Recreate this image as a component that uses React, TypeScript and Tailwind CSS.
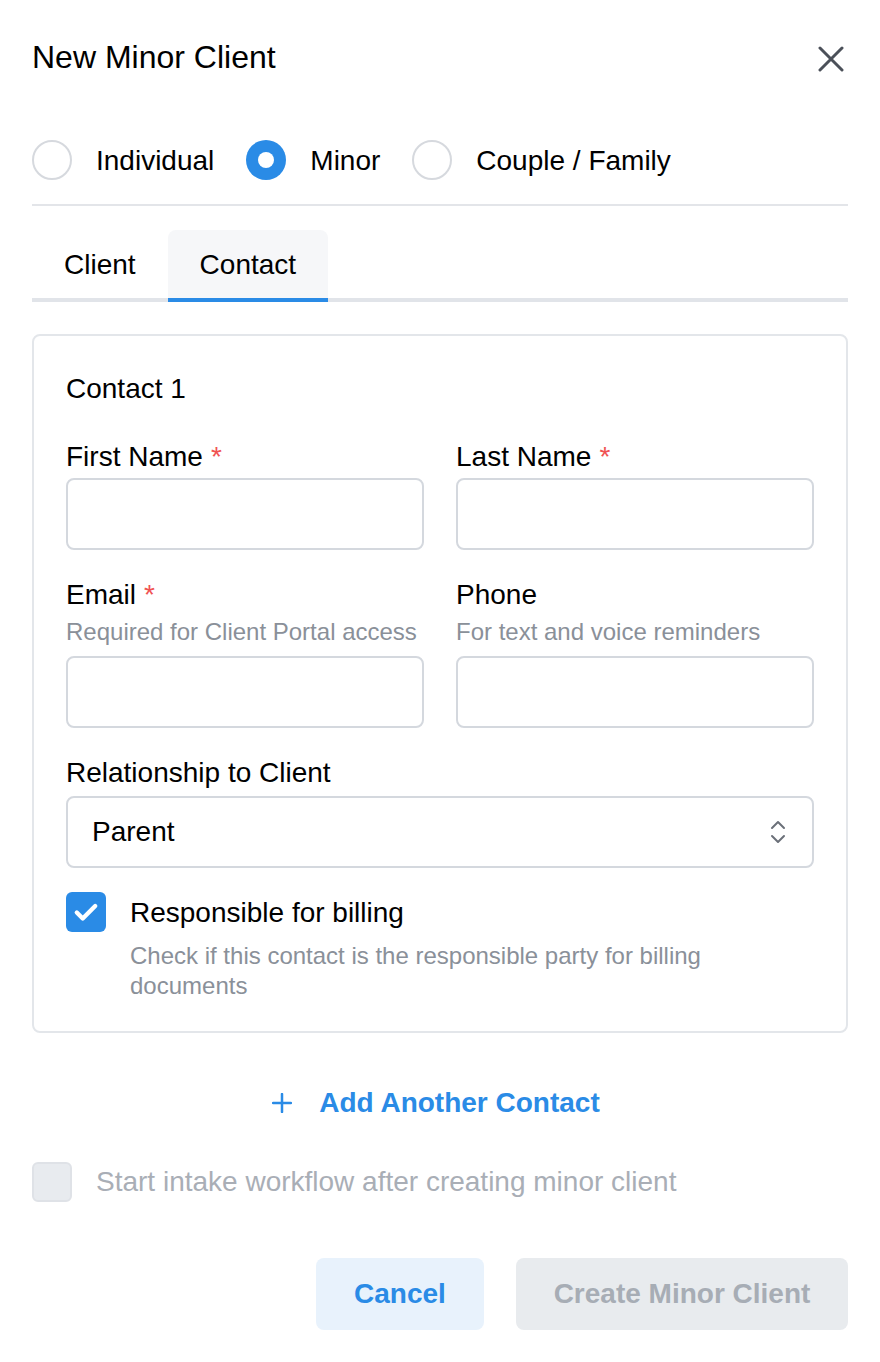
import React, { useState } from 'react';

type RadioOption = { id: string; label: string };

const clientTypes: RadioOption[] = [
  { id: 'individual', label: 'Individual' },
  { id: 'minor', label: 'Minor' },
  { id: 'couple', label: 'Couple / Family' },
];

const FieldLabel: React.FC<{ text: string; required?: boolean }> = ({ text, required }) => (
  <label className="block text-[28px] leading-[42px] text-black">
    {text}
    {required && <span className="ml-2 text-[#f05252]">*</span>}
  </label>
);

const TextInput: React.FC = () => (
  <input
    type="text"
    className="block h-[72px] w-full rounded-lg border-2 border-[#d4d8de] bg-white px-6 text-[28px] outline-none"
  />
);

const App: React.FC = () => {
  const [clientType, setClientType] = useState<string>('minor');
  const [tab, setTab] = useState<'client' | 'contact'>('contact');
  const [billing, setBilling] = useState<boolean>(true);

  return (
    <div
      className="min-h-[1362px] w-[880px] bg-white px-8 pb-8 pt-[37px] text-black"
      style={{ fontFamily: '"Liberation Sans", Arial, sans-serif' }}
    >
      {/* Tiêu đề */}
      <div className="flex h-10 items-center justify-between">
        <h1 className="text-[32px] leading-[40px]">New Minor Client</h1>
        <button className="mr-[4px] mt-[4px] text-[#4b5059]" aria-label="Close">
          <svg width="26" height="26" viewBox="0 0 26 26" fill="none" stroke="currentColor" strokeWidth="3" strokeLinecap="round">
            <path d="M2 2 L24 24 M24 2 L2 24" />
          </svg>
        </button>
      </div>

      {/* Loại khách hàng */}
      <div className="mt-[63px] flex h-10 items-center">
        {clientTypes.map((opt) => {
          const selected = opt.id === clientType;
          return (
            <button
              key={opt.id}
              onClick={() => setClientType(opt.id)}
              className="mr-8 flex items-center"
            >
              {selected ? (
                <span className="flex h-10 w-10 items-center justify-center rounded-full bg-[#2a8be6]">
                  <span className="h-4 w-4 rounded-full bg-white" />
                </span>
              ) : (
                <span className="h-10 w-10 rounded-full border-2 border-[#d6d9de] bg-white" />
              )}
              <span className="ml-6 pt-[2px] text-[28px] leading-[40px]">{opt.label}</span>
            </button>
          );
        })}
      </div>

      <div className="mt-6 h-[2px] bg-[#e3e5e9]" />

      {/* Tabs */}
      <div className="mt-6 flex border-b-4 border-[#e1e4e9]">
        <button
          onClick={() => setTab('client')}
          className={`-mb-1 h-[72px] border-b-4 px-8 pt-[2px] text-[28px] ${
            tab === 'client' ? 'rounded-t-lg border-[#2a8be6] bg-[#f6f7f9]' : 'border-transparent'
          }`}
        >
          Client
        </button>
        <button
          onClick={() => setTab('contact')}
          className={`-mb-1 h-[72px] border-b-4 px-8 pt-[2px] text-[28px] ${
            tab === 'contact' ? 'rounded-t-lg border-[#2a8be6] bg-[#f6f7f9]' : 'border-transparent'
          }`}
        >
          Contact
        </button>
      </div>

      {/* Thẻ liên hệ */}
      <div className="mt-8 rounded-lg border-2 border-[#e3e6ea] px-8 pb-[30px] pt-8">
        <div className="text-[28px] leading-[42px]">Contact 1</div>

        <div className="mt-[26px] grid grid-cols-2 gap-x-8">
          <div>
            <FieldLabel text="First Name" required />
            <TextInput />
          </div>
          <div>
            <FieldLabel text="Last Name" required />
            <TextInput />
          </div>
        </div>

        <div className="mt-6 grid grid-cols-2 gap-x-8">
          <div>
            <FieldLabel text="Email" required />
            <p className="mb-2 text-[24px] leading-[32px] text-[#8a9099]">Required for Client Portal access</p>
            <TextInput />
          </div>
          <div>
            <FieldLabel text="Phone" />
            <p className="mb-2 text-[24px] leading-[32px] text-[#8a9099]">For text and voice reminders</p>
            <TextInput />
          </div>
        </div>

        <div className="mt-6">
          <FieldLabel text="Relationship to Client" />
          <div className="mt-[2px] flex h-[72px] items-center justify-between rounded-lg border-2 border-[#d4d8de] bg-white pl-6 pr-[26px]">
            <span className="text-[28px]">Parent</span>
            <svg width="16" height="24" viewBox="0 0 16 24" fill="none" stroke="#6b7079" strokeWidth="2" strokeLinecap="round" strokeLinejoin="round">
              <path d="M2 8 L8 2 L14 8" />
              <path d="M2 16 L8 22 L14 16" />
            </svg>
          </div>
        </div>

        <div className="mt-6 flex items-start">
          <button
            onClick={() => setBilling(!billing)}
            className={`flex h-10 w-10 shrink-0 items-center justify-center rounded-md ${
              billing ? 'bg-[#2a8be6]' : 'border-2 border-[#d4d8de] bg-white'
            }`}
          >
            {billing && (
              <svg width="26" height="26" viewBox="0 0 24 24" fill="none" stroke="white" strokeWidth="4" strokeLinecap="round" strokeLinejoin="round">
                <path d="M3.5 12.5 L9 18 L20.5 6.5" />
              </svg>
            )}
          </button>
          <div className="ml-6">
            <div className="pt-[1px] text-[28px] leading-[40px]">Responsible for billing</div>
            <p className="mt-[8px] text-[24px] leading-[30px] text-[#8a9099]">
              Check if this contact is the responsible party for billing documents
            </p>
          </div>
        </div>
      </div>

      {/* Thêm liên hệ */}
      <div className="mt-[34px] flex h-[72px] items-center justify-center pr-2">
        <button className="flex items-center text-[#2a8be6]">
          <svg width="20" height="20" viewBox="0 0 20 20" fill="none" stroke="currentColor" strokeWidth="2.5" strokeLinecap="round">
            <path d="M10 1 V19 M1 10 H19" />
          </svg>
          <span className="ml-[27px] text-[28px] font-bold">Add Another Contact</span>
        </button>
      </div>

      {/* Quy trình tiếp nhận */}
      <div className="mt-[23px] flex h-10 items-center">
        <span className="h-10 w-10 rounded-md border-2 border-[#dfe2e7] bg-[#e8ebef]" />
        <span className="ml-6 text-[28px] leading-[40px] text-[#a9aeb6]">
          Start intake workflow after creating minor client
        </span>
      </div>

      {/* Nút thao tác */}
      <div className="mt-14 flex justify-end gap-8">
        <button className="h-[72px] w-[168px] rounded-lg bg-[#e8f2fc] text-[28px] font-bold text-[#2a8be6]">
          Cancel
        </button>
        <button disabled className="h-[72px] w-[332px] rounded-lg bg-[#e8ebee] text-[28px] font-bold text-[#a7adb5]">
          Create Minor Client
        </button>
      </div>
    </div>
  );
};

export default App;
